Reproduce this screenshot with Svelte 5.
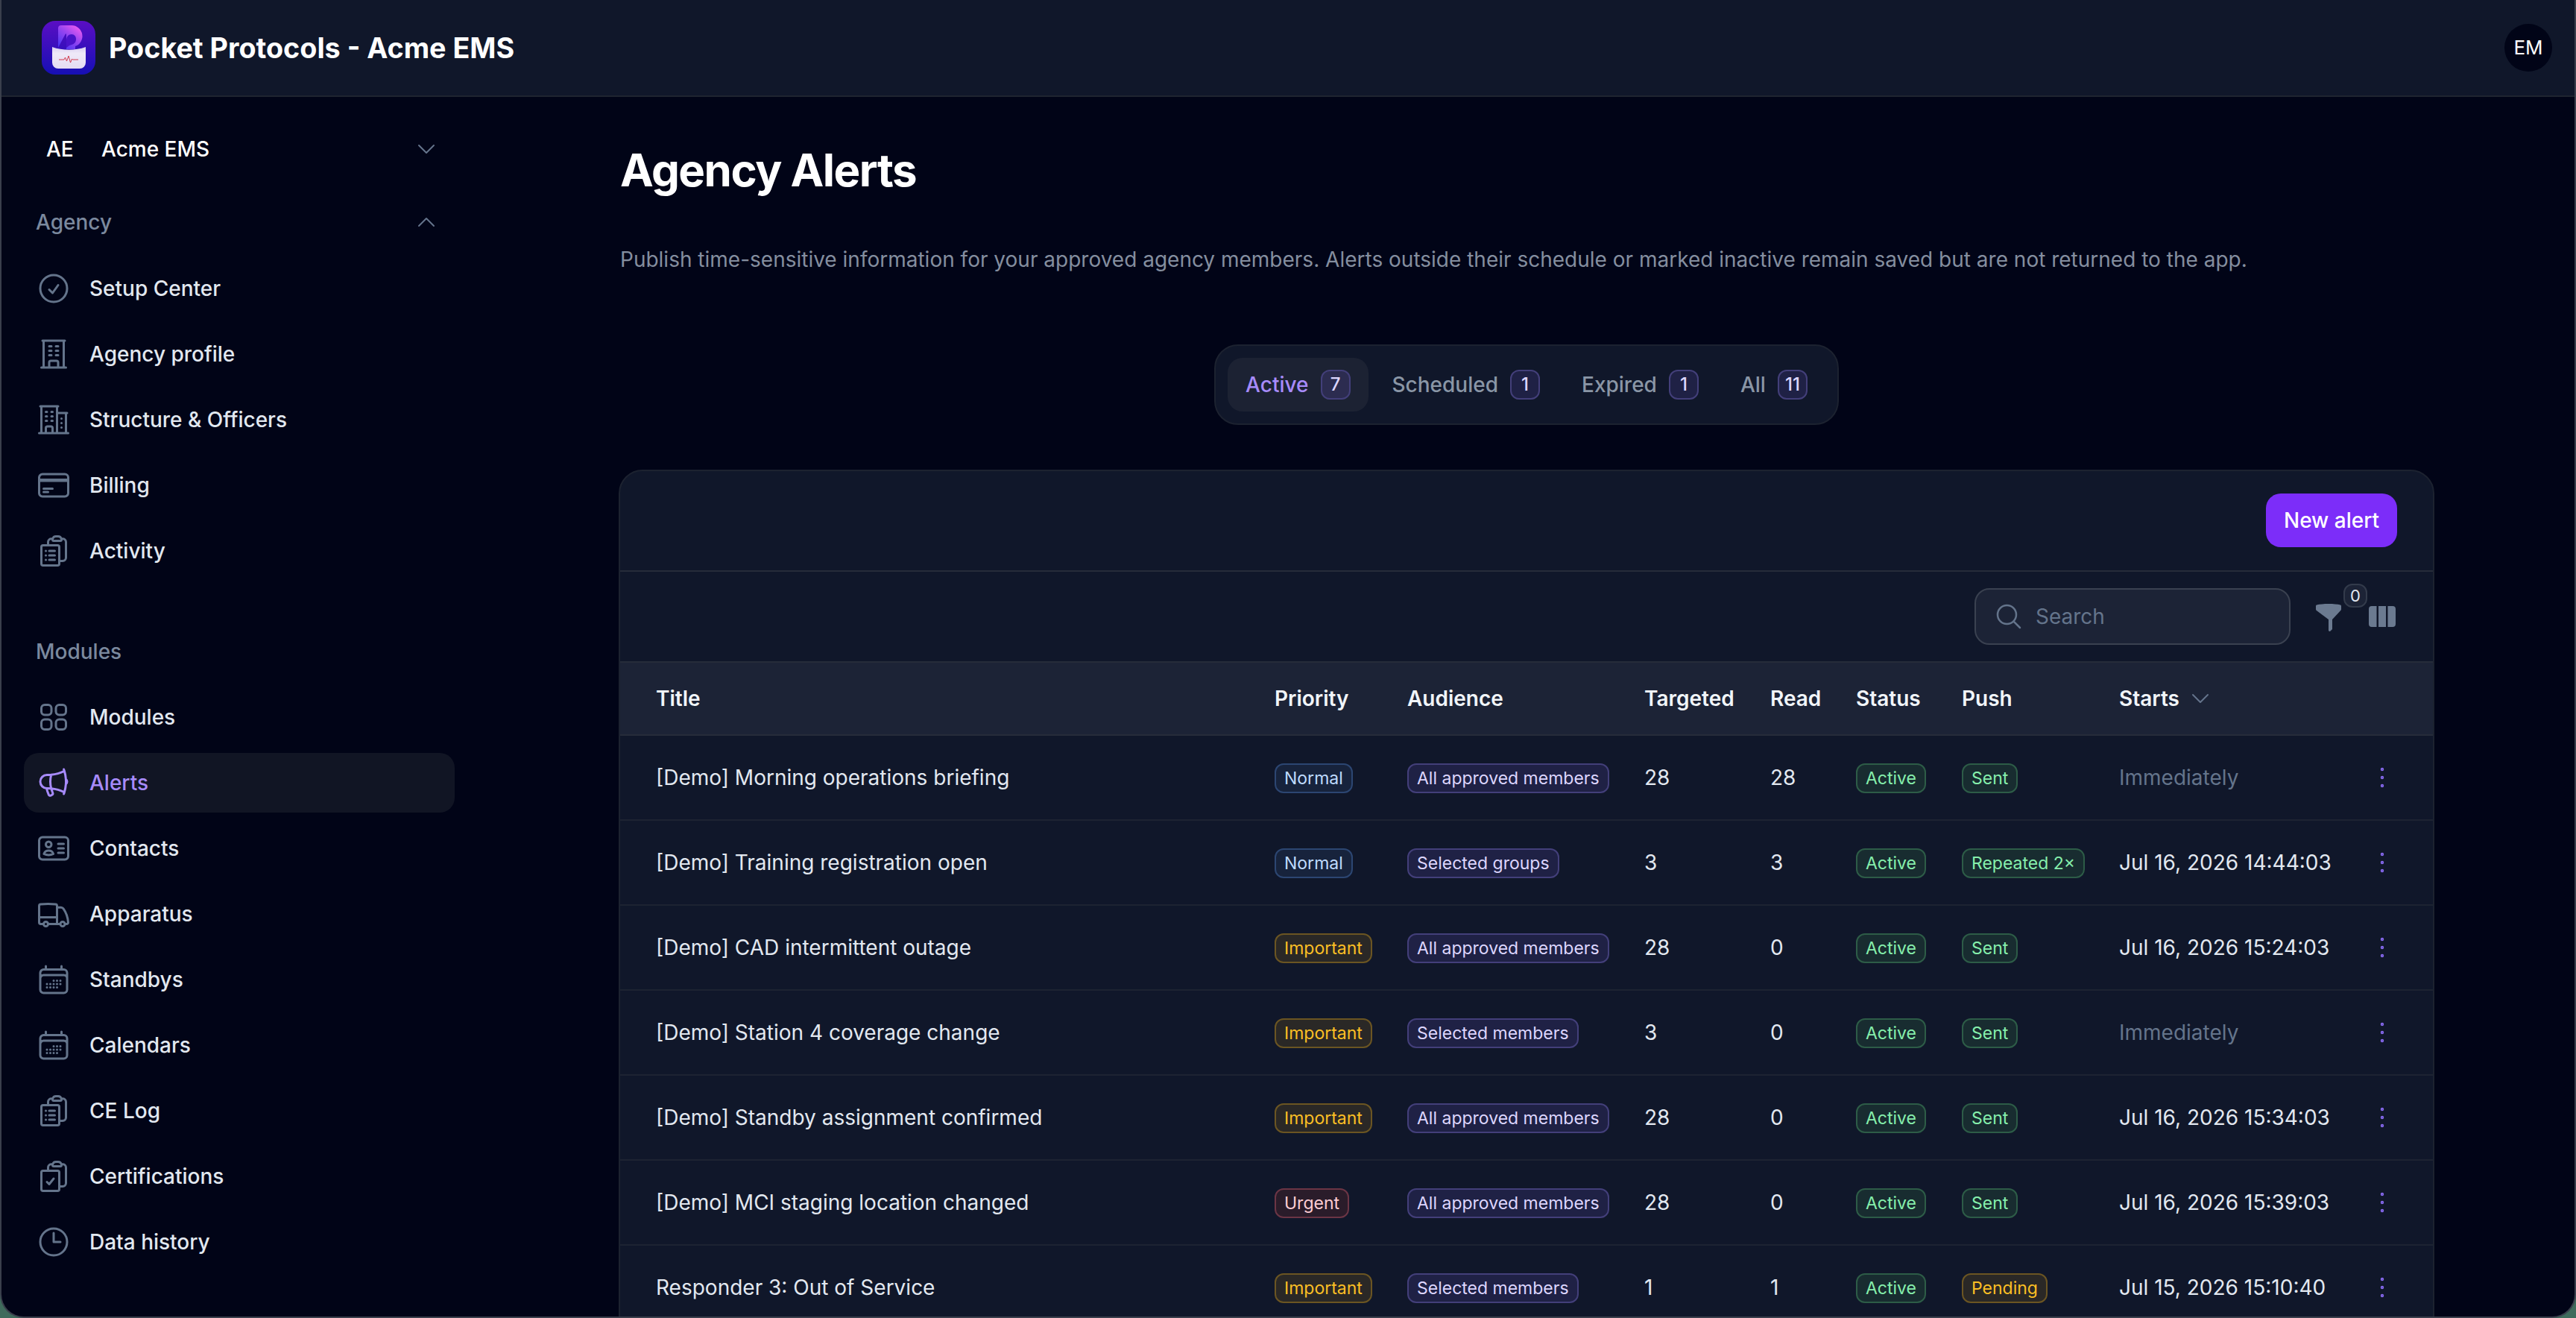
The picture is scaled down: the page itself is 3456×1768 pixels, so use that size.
<script lang="ts">
  const icons: Record<string, string> = {
    check: 'M9 12.75 11.25 15 15 9.75M21 12a9 9 0 1 1-18 0 9 9 0 0 1 18 0Z',
    office: 'M3.75 21h16.5M4.5 3h15M5.25 3v18m13.5-18v18M9 6.75h1.5m-1.5 3h1.5m-1.5 3h1.5m3-6H15m-1.5 3H15m-1.5 3H15M9 21v-3.375c0-.621.504-1.125 1.125-1.125h3.75c.621 0 1.125.504 1.125 1.125V21',
    office2: 'M2.25 21h19.5m-18-18v18m10.5-18v18m6-13.5V21M6.75 6.75h.75m-.75 3h.75m-.75 3h.75m3-6h.75m-.75 3h.75m-.75 3h.75M6.75 21v-3.375c0-.621.504-1.125 1.125-1.125h2.25c.621 0 1.125.504 1.125 1.125V21M3 3h12m-.75 4.5H21m-3.75 3.75h.008v.008h-.008v-.008Zm0 3h.008v.008h-.008v-.008Zm0 3h.008v.008h-.008v-.008Z',
    card: 'M2.25 8.25h19.5M2.25 9h19.5m-16.5 5.25h6m-6 2.25h3m-3.75 3h15a2.25 2.25 0 0 0 2.25-2.25V6.75A2.25 2.25 0 0 0 19.5 4.5h-15a2.25 2.25 0 0 0-2.25 2.25v10.5A2.25 2.25 0 0 0 4.5 19.5Z',
    clipList: 'M9 12h3.75M9 15h3.75M9 18h3.75m3 .75H18a2.25 2.25 0 0 0 2.25-2.25V6.108c0-1.135-.845-2.098-1.976-2.192a48.424 48.424 0 0 0-1.123-.08m-5.801 0c-.065.21-.1.433-.1.664 0 .414.336.75.75.75h4.5a.75.75 0 0 0 .75-.75 2.25 2.25 0 0 0-.1-.664m-5.8 0A2.251 2.251 0 0 1 13.5 2.25H15c1.012 0 1.867.668 2.15 1.586m-5.8 0c-.376.023-.75.05-1.124.08C9.095 4.01 8.25 4.973 8.25 6.108V8.25m0 0H4.875c-.621 0-1.125.504-1.125 1.125v11.25c0 .621.504 1.125 1.125 1.125h9.75c.621 0 1.125-.504 1.125-1.125V9.375c0-.621-.504-1.125-1.125-1.125H8.25ZM6.75 12h.008v.008H6.75V12Zm0 3h.008v.008H6.75V15Zm0 3h.008v.008H6.75V18Z',
    clipCheck: 'M11.35 3.836c-.065.21-.1.433-.1.664 0 .414.336.75.75.75h4.5a.75.75 0 0 0 .75-.75 2.25 2.25 0 0 0-.1-.664m-5.8 0A2.251 2.251 0 0 1 13.5 2.25H15c1.012 0 1.867.668 2.15 1.586m-5.8 0c-.376.023-.75.05-1.124.08C9.095 4.01 8.25 4.973 8.25 6.108V8.25m8.9-4.414c.376.023.75.05 1.124.08 1.131.094 1.976 1.057 1.976 2.192V16.5A2.25 2.25 0 0 1 18 18.75h-2.25m-7.5-10.5H4.875c-.621 0-1.125.504-1.125 1.125v11.25c0 .621.504 1.125 1.125 1.125h9.75c.621 0 1.125-.504 1.125-1.125V18.75m-7.5-10.5h6.375c.621 0 1.125.504 1.125 1.125v9.375m-8.25-3 1.5 1.5 3-3.75',
    squares: 'M3.75 6A2.25 2.25 0 0 1 6 3.75h2.25A2.25 2.25 0 0 1 10.5 6v2.25a2.25 2.25 0 0 1-2.25 2.25H6a2.25 2.25 0 0 1-2.25-2.25V6ZM3.75 15.75A2.25 2.25 0 0 1 6 13.5h2.25a2.25 2.25 0 0 1 2.25 2.25V18a2.25 2.25 0 0 1-2.25 2.25H6A2.25 2.25 0 0 1 3.75 18v-2.25ZM13.5 6a2.25 2.25 0 0 1 2.25-2.25H18A2.25 2.25 0 0 1 20.25 6v2.25A2.25 2.25 0 0 1 18 10.5h-2.25a2.25 2.25 0 0 1-2.25-2.25V6ZM13.5 15.75a2.25 2.25 0 0 1 2.25-2.25H18a2.25 2.25 0 0 1 2.25 2.25V18A2.25 2.25 0 0 1 18 20.25h-2.25A2.25 2.25 0 0 1 13.5 18v-2.25Z',
    megaphone: 'M10.34 15.84c-.688-.06-1.386-.09-2.09-.09H7.5a4.5 4.5 0 1 1 0-9h.75c.704 0 1.402-.03 2.09-.09m0 9.18c.253.962.584 1.892.985 2.783.247.55.06 1.21-.463 1.511l-.657.38c-.551.318-1.26.117-1.527-.461a20.845 20.845 0 0 1-1.44-4.282m3.102.069a18.03 18.03 0 0 1-.59-4.59c0-1.586.205-3.124.59-4.59m0 9.18a23.848 23.848 0 0 1 8.835 2.535M10.34 6.66a23.847 23.847 0 0 0 8.835-2.535m0 0A23.74 23.74 0 0 0 18.795 3m.38 1.125a23.91 23.91 0 0 1 1.014 5.395m-1.014 8.855c-.118.38-.245.754-.38 1.125m.38-1.125a23.91 23.91 0 0 0 1.014-5.395m0-3.46c.495.413.811 1.035.811 1.73 0 .695-.316 1.317-.811 1.73m0-3.46a24.347 24.347 0 0 1 0 3.46',
    contact: 'M15 9h3.75M15 12h3.75M15 15h3.75M4.5 19.5h15a2.25 2.25 0 0 0 2.25-2.25V6.75A2.25 2.25 0 0 0 19.5 4.5h-15a2.25 2.25 0 0 0-2.25 2.25v10.5A2.25 2.25 0 0 0 4.5 19.5Zm6-10.125a1.875 1.875 0 1 1-3.75 0 1.875 1.875 0 0 1 3.75 0Zm1.294 6.336a6.721 6.721 0 0 1-3.17.789 6.721 6.721 0 0 1-3.168-.789 3.376 3.376 0 0 1 6.338 0Z',
    truck: 'M8.25 18.75a1.5 1.5 0 0 1-3 0m3 0a1.5 1.5 0 0 0-3 0m3 0h6m-9 0H3.375a1.125 1.125 0 0 1-1.125-1.125V14.25m17.25 4.5a1.5 1.5 0 0 1-3 0m3 0a1.5 1.5 0 0 0-3 0m3 0h1.125c.621 0 1.129-.504 1.09-1.124a17.902 17.902 0 0 0-3.213-9.193 2.056 2.056 0 0 0-1.58-.86H14.25M16.5 18.75h-2.25m0-11.177v-.958c0-.568-.422-1.048-.987-1.106a48.554 48.554 0 0 0-10.026 0 1.106 1.106 0 0 0-.987 1.106v7.635m12-6.677v6.677m0 4.5v-4.5m0 0h-12',
    calendar: 'M6.75 3v2.25M17.25 3v2.25M3 18.75V7.5a2.25 2.25 0 0 1 2.25-2.25h13.5A2.25 2.25 0 0 1 21 7.5v11.25m-18 0A2.25 2.25 0 0 0 5.25 21h13.5A2.25 2.25 0 0 0 21 18.75m-18 0v-7.5A2.25 2.25 0 0 1 5.25 9h13.5A2.25 2.25 0 0 1 21 11.25v7.5m-9-6h.008v.008H12v-.008ZM12 15h.008v.008H12V15Zm0 2.25h.008v.008H12v-.008ZM9.75 15h.008v.008H9.75V15Zm0 2.25h.008v.008H9.75v-.008ZM7.5 15h.008v.008H7.5V15Zm0 2.25h.008v.008H7.5v-.008Zm6.75-4.5h.008v.008h-.008v-.008Zm0 2.25h.008v.008h-.008V15Zm0 2.25h.008v.008h-.008v-.008Zm2.25-4.5h.008v.008H16.5v-.008Zm0 2.25h.008v.008H16.5V15Z',
    clock: 'M12 6v6h4.5m4.5 0a9 9 0 1 1-18 0 9 9 0 0 1 18 0Z',
    down: 'm19.5 8.25-7.5 7.5-7.5-7.5',
    up: 'm4.5 15.75 7.5-7.5 7.5 7.5',
    search: 'm21 21-5.197-5.197m0 0A7.5 7.5 0 1 0 5.196 5.196a7.5 7.5 0 0 0 10.607 10.607Z',
    dots: 'M12 6.75a.75.75 0 1 1 0-1.5.75.75 0 0 1 0 1.5ZM12 12.75a.75.75 0 1 1 0-1.5.75.75 0 0 1 0 1.5ZM12 18.75a.75.75 0 1 1 0-1.5.75.75 0 0 1 0 1.5Z'
  };

  const agencyNav = [
    { label: 'Setup Center', icon: 'check' },
    { label: 'Agency profile', icon: 'office' },
    { label: 'Structure & Officers', icon: 'office2' },
    { label: 'Billing', icon: 'card' },
    { label: 'Activity', icon: 'clipList' }
  ];

  const moduleNav = [
    { label: 'Modules', icon: 'squares' },
    { label: 'Alerts', icon: 'megaphone', active: true },
    { label: 'Contacts', icon: 'contact' },
    { label: 'Apparatus', icon: 'truck' },
    { label: 'Standbys', icon: 'calendar' },
    { label: 'Calendars', icon: 'calendar' },
    { label: 'CE Log', icon: 'clipList' },
    { label: 'Certifications', icon: 'clipCheck' },
    { label: 'Data history', icon: 'clock' }
  ];

  const tabs = [
    { label: 'Active', count: 7, active: true },
    { label: 'Scheduled', count: 1 },
    { label: 'Expired', count: 1 },
    { label: 'All', count: 11 }
  ];

  const columns = ['Title', 'Priority', 'Audience', 'Targeted', 'Read', 'Status', 'Push'];

  const rows = [
    { title: '[Demo] Morning operations briefing', priority: 'Normal', audience: 'All approved members', targeted: 28, read: 28, push: 'Sent', starts: 'Immediately' },
    { title: '[Demo] Training registration open', priority: 'Normal', audience: 'Selected groups', targeted: 3, read: 3, push: 'Repeated 2×', starts: 'Jul 16, 2026 14:44:03' },
    { title: '[Demo] CAD intermittent outage', priority: 'Important', audience: 'All approved members', targeted: 28, read: 0, push: 'Sent', starts: 'Jul 16, 2026 15:24:03' },
    { title: '[Demo] Station 4 coverage change', priority: 'Important', audience: 'Selected members', targeted: 3, read: 0, push: 'Sent', starts: 'Immediately' },
    { title: '[Demo] Standby assignment confirmed', priority: 'Important', audience: 'All approved members', targeted: 28, read: 0, push: 'Sent', starts: 'Jul 16, 2026 15:34:03' },
    { title: '[Demo] MCI staging location changed', priority: 'Urgent', audience: 'All approved members', targeted: 28, read: 0, push: 'Sent', starts: 'Jul 16, 2026 15:39:03' },
    { title: 'Responder 3: Out of Service', priority: 'Important', audience: 'Selected members', targeted: 1, read: 1, push: 'Pending', starts: 'Jul 15, 2026 15:10:40' }
  ];
</script>

{#snippet icon(name: string, cls: string)}
  <svg class={cls} viewBox="0 0 24 24" fill="none" stroke="currentColor" stroke-width="1.5" stroke-linecap="round" stroke-linejoin="round">
    <path d={icons[name]} />
  </svg>
{/snippet}

{#snippet navList(items: { label: string; icon: string; active?: boolean }[])}
  <ul class="nav">
    {#each items as item}
      <li class="nav-item" class:active={item.active}>
        {@render icon(item.icon, 'nav-icon')}
        <span>{item.label}</span>
      </li>
    {/each}
  </ul>
{/snippet}

<div class="window">
  <header class="topbar">
    <svg class="logo" viewBox="0 0 72 72">
      <defs>
        <linearGradient id="logoBg" x1="0" y1="0" x2="0" y2="1">
          <stop offset="0" stop-color="#5a0ec4" />
          <stop offset="1" stop-color="#160fb4" />
        </linearGradient>
        <linearGradient id="logoP" x1="0.1" y1="0.9" x2="0.8" y2="0">
          <stop offset="0" stop-color="#4a35f0" />
          <stop offset="0.55" stop-color="#9a45f0" />
          <stop offset="1" stop-color="#ee5cf0" />
        </linearGradient>
        <linearGradient id="logoPocket" x1="0" y1="0" x2="0" y2="1">
          <stop offset="0" stop-color="#d8cdf0" />
          <stop offset="0.3" stop-color="#efe9f8" />
          <stop offset="1" stop-color="#e4dcf2" />
        </linearGradient>
      </defs>
      <rect width="72" height="72" rx="18" fill="url(#logoBg)" />
      <path d="M22 10a4 4 0 0 1 4-4h14a14.500 14.500 0 0 1 5 28.100V38H33V18c0-1-1-1-1.500 0L22 36Z" fill="url(#logoP)" />
      <path d="M33 36V27c0-6 3-9 7-9s6 3 6 6.500-2 6.500-6 7.500l-3 1Z" fill="#4a12c8" />
      <path d="M14 35c14 5 31 5 45 0v21a8 8 0 0 1-8 8H22a8 8 0 0 1-8-8Z" fill="url(#logoPocket)" />
      <path d="M23 52h7l1.500-3 2 5 2.500-7 2.500 9 2-5 1 1h7.500" fill="none" stroke="#d23c50" stroke-width="1" stroke-linejoin="round" />
    </svg>
    <span class="brand">Pocket Protocols - Acme EMS</span>
    <span class="avatar">EM</span>
  </header>

  <div class="body">
    <aside class="sidebar">
      <div class="team">
        <span class="team-initials">AE</span>
        <span class="team-name">Acme EMS</span>
        {@render icon('down', 'chev')}
      </div>

      <div class="section-head first">
        <span>Agency</span>
        {@render icon('up', 'chev')}
      </div>
      {@render navList(agencyNav)}

      <div class="section-head second">
        <span>Modules</span>
      </div>
      {@render navList(moduleNav)}
    </aside>

    <main class="main">
      <h1>Agency Alerts</h1>
      <p class="lede">Publish time-sensitive information for your approved agency members. Alerts outside their schedule or marked inactive remain saved but are not returned to the app.</p>

      <div class="tabs-wrap">
        <div class="tabs">
          {#each tabs as tab}
            <div class="tab" class:active={tab.active}>
              <span>{tab.label}</span>
              <span class="count">{tab.count}</span>
            </div>
          {/each}
        </div>
      </div>

      <section class="card">
        <div class="actions">
          <button type="button" class="primary">New alert</button>
        </div>
        <div class="filters">
          <div class="search">
            {@render icon('search', 'search-icon')}
            <span>Search</span>
          </div>
          <div class="filter-btn">
            <svg class="funnel" viewBox="0 0 34 38" fill="currentColor">
              <path d="M1 2.500C8 .5 26 .5 33 2.500c.6.2 1 .7 1 1.300v4.400c0 .6-.2 1.100-.6 1.500L22 22v13l-2.500 2.600c-.8.600-2.500.2-2.500-1V22L.6 9.700C.2 9.300 0 8.800 0 8.200V3.800c0-.6.400-1.100 1-1.300Z" />
            </svg>
            <span class="filter-count">0</span>
          </div>
          <svg class="columns-icon" viewBox="0 0 36 28" fill="currentColor">
            <path d="M4 0h6.500v28H4a4 4 0 0 1-4-4V4a4 4 0 0 1 4-4ZM13 0h10v28H13ZM25.500 0H32a4 4 0 0 1 4 4v20a4 4 0 0 1-4 4h-6.500Z" />
          </svg>
        </div>

        <table>
          <colgroup>
            <col /><col /><col /><col /><col /><col /><col /><col /><col />
          </colgroup>
          <thead>
            <tr>
              {#each columns as col}
                <th>{col}</th>
              {/each}
              <th>
                <span class="sort">Starts {@render icon('down', 'sort-icon')}</span>
              </th>
              <th></th>
            </tr>
          </thead>
          <tbody>
            {#each rows as row}
              <tr>
                <td>{row.title}</td>
                <td><span class="pill {row.priority.toLowerCase()}">{row.priority}</span></td>
                <td><span class="pill audience">{row.audience}</span></td>
                <td>{row.targeted}</td>
                <td>{row.read}</td>
                <td><span class="pill ok">Active</span></td>
                <td><span class="pill {row.push === 'Pending' ? 'important' : 'ok'}">{row.push}</span></td>
                <td class:muted={row.starts === 'Immediately'}>{row.starts}</td>
                <td class="menu">{@render icon('dots', 'dots-icon')}</td>
              </tr>
            {/each}
          </tbody>
        </table>
      </section>
    </main>
  </div>
</div>

<style>
  :global(body) {
    margin: 0;
    background: #3f6b5c;
    font-family: Inter, 'Liberation Sans', sans-serif;
  }

  .window {
    box-sizing: border-box;
    width: 3456px;
    height: 1768px;
    display: flex;
    flex-direction: column;
    overflow: hidden;
    background: #010417;
    border: 2px solid #3a3f4c;
    border-top: none;
    border-radius: 0 0 32px 32px;
    color: #e2e8f0;
    font-size: 28px;
    line-height: 40px;
  }

  .topbar {
    flex: none;
    display: flex;
    align-items: center;
    height: 128px;
    padding: 0 30px 0 54px;
    background: #10172a;
    border-bottom: 2px solid #1f2430;
  }

  .logo {
    width: 72px;
    height: 72px;
    flex: none;
  }

  .brand {
    margin-left: 18px;
    flex: 1;
    font-size: 37.7px;
    font-weight: 700;
    color: #fff;
  }

  .avatar {
    width: 64px;
    height: 64px;
    border-radius: 50%;
    display: flex;
    align-items: center;
    justify-content: center;
    background: #010417;
    color: #fff;
    font-size: 26px;
  }

  .body {
    flex: 1;
    display: flex;
    min-height: 0;
  }

  .sidebar {
    flex: none;
    box-sizing: border-box;
    width: 638px;
    padding: 30px 30px 0;
  }

  .team {
    display: flex;
    align-items: center;
    height: 80px;
    padding: 0 22px 0 30px;
    color: #fff;
    font-weight: 500;
  }

  .team-initials {
    width: 74px;
  }

  .team-name {
    flex: 1;
  }

  .chev {
    width: 32px;
    height: 32px;
    color: #64748b;
  }

  .section-head {
    display: flex;
    align-items: center;
    justify-content: space-between;
    padding: 0 22px 0 16px;
    color: #7b899e;
    font-weight: 500;
  }

  .section-head.first {
    margin-top: 38px;
  }

  .section-head.second {
    margin-top: 75px;
  }

  .nav {
    list-style: none;
    margin: 28px 0 0;
    padding: 0;
    display: flex;
    flex-direction: column;
    gap: 8px;
  }

  .section-head.first + .nav {
    margin-top: 29px;
  }

  .nav-item {
    display: flex;
    align-items: center;
    gap: 24px;
    height: 80px;
    padding: 0 16px;
    border-radius: 20px;
    font-weight: 500;
  }

  .nav-icon {
    width: 48px;
    height: 48px;
    color: #64748b;
    flex: none;
  }

  .nav-item.active {
    background: #111524;
    color: #a78bfa;
  }

  .nav-item.active .nav-icon {
    color: #a78bfa;
  }

  .main {
    flex: 1;
    min-width: 0;
    padding: 62px 188px 0 190px;
  }

  h1 {
    margin: 0 0 0 2px;
    font-size: 60px;
    line-height: 72px;
    font-weight: 700;
    letter-spacing: -1.5px;
    color: #fff;
  }

  .lede {
    margin: 64px 0 0 2px;
    color: #848e9f;
  }

  .tabs-wrap {
    display: flex;
    justify-content: center;
    margin-top: 94px;
  }

  .tabs {
    display: flex;
    gap: 8px;
    padding: 16px;
    background: #10172a;
    border: 2px solid #1c2230;
    border-radius: 32px;
  }

  .tab {
    display: flex;
    align-items: center;
    gap: 16px;
    height: 72px;
    padding: 0 24px;
    border-radius: 20px;
    color: #8a96a6;
    font-weight: 500;
  }

  .tab.active {
    background: #1c2233;
    color: #a78bfa;
  }

  .count {
    box-sizing: border-box;
    min-width: 40px;
    height: 40px;
    padding: 0 8px;
    display: flex;
    align-items: center;
    justify-content: center;
    border: 2px solid #433f7a;
    border-radius: 12px;
    background: #1f2145;
    color: #ddd6fe;
    font-size: 24px;
  }

  .tab.active .count {
    background: #2c2c50;
  }

  .card {
    margin-top: 60px;
    background: #10172a;
    border: 2px solid #1c2230;
    border-radius: 32px 32px 0 0;
    overflow: hidden;
  }

  .actions {
    display: flex;
    justify-content: flex-end;
    padding: 30px 48px 31px;
    border-bottom: 2px solid #262c3a;
  }

  .primary {
    width: 176px;
    height: 72px;
    padding: 0;
    border: none;
    border-radius: 20px;
    background: #7c2df9;
    color: #fff;
    font: inherit;
    font-weight: 500;
  }

  .filters {
    display: flex;
    align-items: center;
    justify-content: flex-end;
    height: 120px;
    padding-right: 50px;
    border-bottom: 2px solid #262c3a;
  }

  .search {
    box-sizing: border-box;
    width: 424px;
    height: 76px;
    display: flex;
    align-items: center;
    gap: 16px;
    padding: 0 24px;
    background: #1c2336;
    border: 2px solid #3a4150;
    border-radius: 20px;
    color: #64748b;
  }

  .search-icon {
    width: 40px;
    height: 40px;
    flex: none;
  }

  .filter-btn {
    position: relative;
    width: 105px;
    height: 76px;
  }

  .funnel {
    position: absolute;
    left: 34px;
    top: 20px;
    width: 34px;
    height: 38px;
    color: #6b7a90;
  }

  .filter-count {
    position: absolute;
    left: 71px;
    top: -6px;
    box-sizing: border-box;
    width: 32px;
    height: 32px;
    display: flex;
    align-items: center;
    justify-content: center;
    border: 2px solid #333b4b;
    border-radius: 12px;
    background: #1c2336;
    color: #e2e8f0;
    font-size: 22px;
  }

  .columns-icon {
    width: 36px;
    height: 28px;
    color: #6b7a90;
  }

  table {
    width: 100%;
    table-layout: fixed;
    border-collapse: separate;
    border-spacing: 0;
  }

  col:nth-child(1) { width: 878px; }
  col:nth-child(2) { width: 178px; }
  col:nth-child(3) { width: 318px; }
  col:nth-child(4) { width: 169px; }
  col:nth-child(5) { width: 115px; }
  col:nth-child(6) { width: 142px; }
  col:nth-child(7) { width: 211px; }
  col:nth-child(8) { width: 353px; }

  th {
    height: 96px;
    padding: 0;
    background: #1c2336;
    border-bottom: 2px solid #262c3a;
    color: #f1f5f9;
    font-weight: 600;
    text-align: left;
  }

  td {
    height: 112px;
    padding: 0;
    border-bottom: 2px solid #1d2332;
    color: #e2e8f0;
    white-space: nowrap;
  }

  th:first-child,
  td:first-child {
    padding-left: 48px;
  }

  .sort {
    display: inline-flex;
    align-items: center;
    gap: 12px;
  }

  .sort-icon {
    width: 32px;
    height: 32px;
    color: #64748b;
  }

  .muted {
    color: #64748b;
  }

  .menu {
    color: #8b6cf6;
  }

  .dots-icon {
    display: block;
    width: 44px;
    height: 44px;
    margin-left: -22px;
    stroke-width: 0.9;
  }

  .pill {
    box-sizing: border-box;
    display: inline-flex;
    align-items: center;
    height: 40px;
    padding: 0 11px;
    border: 2px solid;
    border-radius: 12px;
    font-size: 23px;
    vertical-align: middle;
  }

  .normal {
    background: #17233c;
    border-color: #2c4672;
    color: #bfdbfe;
  }

  .important {
    background: #2a2826;
    border-color: #6b5522;
    color: #fbbf24;
  }

  .urgent {
    background: #2a1c2a;
    border-color: #6b3545;
    color: #fecdd3;
  }

  .audience {
    background: #1f2145;
    border-color: #433f7a;
    color: #ddd6fe;
  }

  .ok {
    background: #182c30;
    border-color: #2d5c47;
    color: #86efac;
  }
</style>
